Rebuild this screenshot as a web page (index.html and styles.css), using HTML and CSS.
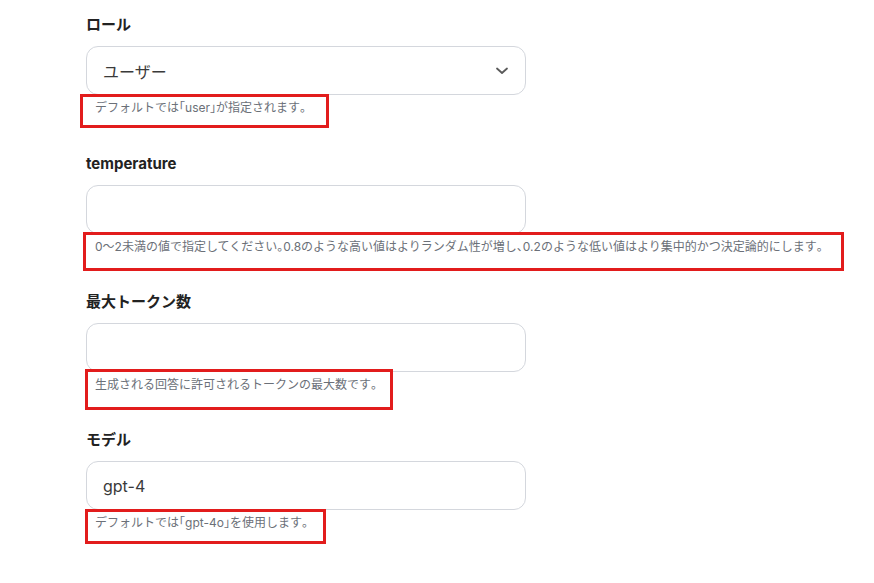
FILE: index.html
```html
<!doctype html>
<html lang="ja">
<head>
<meta charset="UTF-8">
<title>設定</title>
<link rel="stylesheet" href="styles.css">
</head>
<body>
<div class="form">
	<div class="field">
		<div class="label">ロール</div>
		<div class="control select">
			<span class="value">ユーザー</span>
			<svg class="chevron" width="14" height="8" viewBox="0 0 14 8"><path d="M2 1.5 L7 6 L12 1.5" fill="none" stroke="#5a5a5a" stroke-width="1.8" stroke-linecap="round" stroke-linejoin="round"/></svg>
		</div>
		<div class="help">
			デフォルトでは<span class="p">「</span>user<span class="p">」</span>が指定されます<span class="p">。</span>
			<span class="mark mark1"></span>
		</div>
	</div>
	<div class="field">
		<div class="label">temperature</div>
		<div class="control"></div>
		<div class="help">
			0〜2未満の値で指定してください<span class="p">。</span>0.8のような高い値はよりランダム性が増し<span class="p">、</span>0.2のような低い値はより集中的かつ決定論的にします<span class="p">。</span>
			<span class="mark mark2"></span>
		</div>
	</div>
	<div class="field">
		<div class="label">最大トークン数</div>
		<div class="control"></div>
		<div class="help">
			生成される回答に許可されるトークンの最大数です<span class="p">。</span>
			<span class="mark mark3"></span>
		</div>
	</div>
	<div class="field">
		<div class="label">モデル</div>
		<div class="control"><span class="value">gpt-4</span></div>
		<div class="help">
			デフォルトでは<span class="p">「</span>gpt-4o<span class="p">」</span>を使用します<span class="p">。</span>
			<span class="mark mark4"></span>
		</div>
	</div>
</div>
</body>
</html>
```
FILE: styles.css
```css
*{margin:0;padding:0;box-sizing:border-box;}
html,body{background:#fff;}
body{font-family:Inter,"Noto Sans CJK JP",sans-serif;color:#222;overflow:hidden;}
.form{padding:15px 0 0 86px;width:874px;}
.field{margin-bottom:36px;}
.field:first-child{margin-bottom:37px;}
.label{font-size:15px;font-weight:700;line-height:20px;color:#222;margin-bottom:11px;}
.control{width:440px;height:49px;border:1px solid #d4d7dd;border-radius:12px;display:flex;align-items:center;justify-content:space-between;padding:0 16px 0 16px;}
.value{font-size:16px;color:#3a3a3a;}
.chevron{display:block;}
.help{position:relative;font-size:12px;line-height:18px;color:#6b7078;margin-top:4px;padding-left:9px;}
.help .p{font-feature-settings:"halt";}
.mark{position:absolute;border:3px solid #e21c1c;}
.mark1{left:-6px;top:-5px;width:249px;height:34px;}
.mark2{left:-3px;top:-6px;width:761px;height:39px;}
.mark3{left:-1px;top:-7px;width:308px;height:41px;}
.mark4{left:-1px;top:-5px;width:241px;height:35px;}
```
